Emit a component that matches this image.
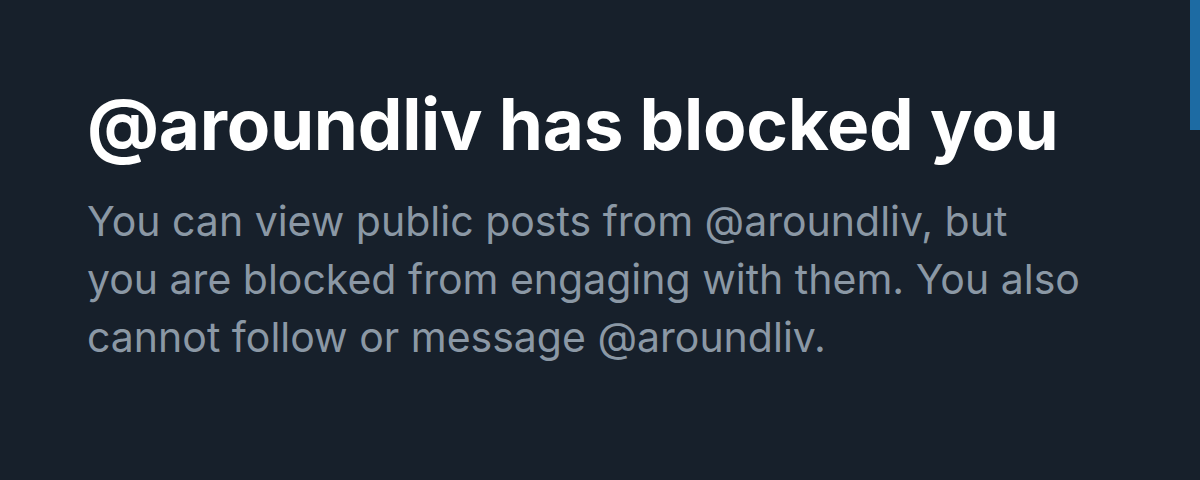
export default function App() {
  return (
    <div className="relative h-[480px] w-[1200px] overflow-hidden bg-[#17202b] font-['Inter','Liberation_Sans',sans-serif]">
      <div className="absolute right-0 top-0 h-[130px] w-[10px] bg-[#1d6ba3]" />
      <div className="pl-[87px] pt-[84px]">
        <h1 className="text-[71px] font-bold leading-[80px] tracking-[-0.3px] text-white">@aroundliv has blocked you</h1>
        <p className="mt-[28px] text-[41px] leading-[58px] text-[#8b98a5]">
          You can view public posts from @aroundliv, but
          <br />
          you are blocked from engaging with them. You also
          <br />
          cannot follow or message @aroundliv.
        </p>
      </div>
    </div>
  )
}
